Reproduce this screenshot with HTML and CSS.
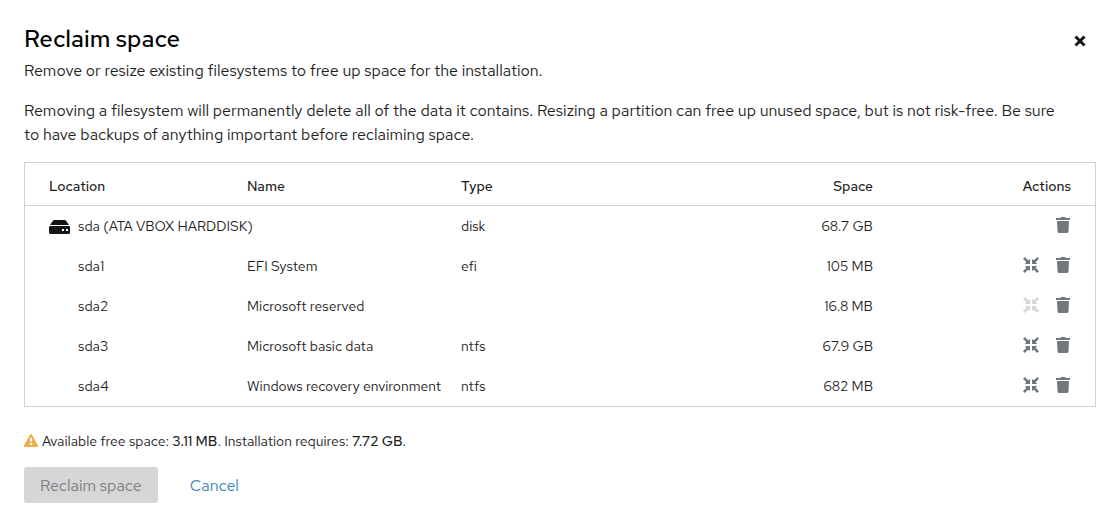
FILE: index.html
```html
<!DOCTYPE html>
<html lang="en">
<head>
    <meta charset="UTF-8">
    <meta name="viewport" content="width=device-width, initial-scale=1.0">
    <title>Reclaim space</title>
    <link rel="stylesheet" href="styles.css">
</head>
<body>

<!-- Shared icons -->
<svg class="sprite" aria-hidden="true">
    <symbol id="icon-trash" viewBox="0 0 14 16">
        <path d="M0 1h4.200L5 0h4l.8 1H14V3H0zM1 4h12l-.5 10.600a1.500 1.500 0 0 1-1.500 1.400H3a1.500 1.500 0 0 1-1.500-1.400z"/>
    </symbol>
    <symbol id="icon-shrink" viewBox="0 0 16 16">
        <path d="M1.800 0 5 3.200 7 2V7H2l1.200-2L0 1.800z"/>
        <path d="M14.200 0 11 3.200 9 2V7h5l-1.200-2L16 1.800z"/>
        <path d="M1.800 16 5 12.800 7 14V9H2l1.200 2L0 14.200z"/>
        <path d="M14.200 16 11 12.800 9 14V9h5l-1.200 2 3.200 3.200z"/>
    </symbol>
</svg>

<main class="dialog">
    <header class="dialog-header">
        <div>
            <h1>Reclaim space</h1>
            <p>Remove or resize existing filesystems to free up space for the installation.</p>
        </div>
        <button type="button" class="close" aria-label="Close">
            <svg width="12" height="12" viewBox="0 0 12 12"><path d="M1.500 1.500l9 9M10.500 1.500l-9 9" stroke="currentColor" stroke-width="3"/></svg>
        </button>
    </header>

    <p class="description">Removing a filesystem will permanently delete all of the data it contains. Resizing a partition can free up unused space, but is not risk-free. Be sure to have backups of anything important before reclaiming space.</p>

    <table class="devices">
        <thead>
            <tr>
                <th>Location</th>
                <th>Name</th>
                <th>Type</th>
                <th class="right">Space</th>
                <th class="right">Actions</th>
            </tr>
        </thead>
        <tbody>
            <tr>
                <td>
                    <div class="disk">
                        <svg width="21" height="14" viewBox="0 0 21 14">
                            <path d="M5.500 0h10a2 2 0 0 1 1.600.8L20 5H1L3.900.8A2 2 0 0 1 5.500 0z"/>
                            <path d="M1.300 6h18.400A1.300 1.300 0 0 1 21 7.300v5A1.500 1.500 0 0 1 19.500 14h-18A1.500 1.500 0 0 1 0 12.500V7.300A1.300 1.300 0 0 1 1.300 6z"/>
                            <path d="M13 9h2v2h-2zM17 9h2v2h-2z" fill="#fff"/>
                        </svg>
                        sda (ATA VBOX HARDDISK)
                    </div>
                </td>
                <td></td>
                <td>disk</td>
                <td class="right">68.7 GB</td>
                <td>
                    <div class="actions">
                        <button type="button" aria-label="Delete sda"><svg width="14" height="16"><use href="#icon-trash"/></svg></button>
                    </div>
                </td>
            </tr>
            <tr>
                <td class="partition">sda1</td>
                <td>EFI System</td>
                <td>efi</td>
                <td class="right">105 MB</td>
                <td>
                    <div class="actions">
                        <button type="button" aria-label="Shrink sda1"><svg width="16" height="16"><use href="#icon-shrink"/></svg></button>
                        <button type="button" aria-label="Delete sda1"><svg width="14" height="16"><use href="#icon-trash"/></svg></button>
                    </div>
                </td>
            </tr>
            <tr>
                <td class="partition">sda2</td>
                <td>Microsoft reserved</td>
                <td></td>
                <td class="right">16.8 MB</td>
                <td>
                    <div class="actions">
                        <button type="button" aria-label="Shrink sda2" disabled><svg width="16" height="16"><use href="#icon-shrink"/></svg></button>
                        <button type="button" aria-label="Delete sda2"><svg width="14" height="16"><use href="#icon-trash"/></svg></button>
                    </div>
                </td>
            </tr>
            <tr>
                <td class="partition">sda3</td>
                <td>Microsoft basic data</td>
                <td>ntfs</td>
                <td class="right">67.9 GB</td>
                <td>
                    <div class="actions">
                        <button type="button" aria-label="Shrink sda3"><svg width="16" height="16"><use href="#icon-shrink"/></svg></button>
                        <button type="button" aria-label="Delete sda3"><svg width="14" height="16"><use href="#icon-trash"/></svg></button>
                    </div>
                </td>
            </tr>
            <tr>
                <td class="partition">sda4</td>
                <td>Windows recovery environment</td>
                <td>ntfs</td>
                <td class="right">682 MB</td>
                <td>
                    <div class="actions">
                        <button type="button" aria-label="Shrink sda4"><svg width="16" height="16"><use href="#icon-shrink"/></svg></button>
                        <button type="button" aria-label="Delete sda4"><svg width="14" height="16"><use href="#icon-trash"/></svg></button>
                    </div>
                </td>
            </tr>
        </tbody>
    </table>

    <footer class="dialog-footer">
        <div class="status">
            <svg width="14" height="13" viewBox="0 0 14 13">
                <path d="M7 0a1 1 0 0 1 .9.500l6 10.800A1.100 1.100 0 0 1 13 13H1a1.100 1.100 0 0 1-.9-1.700l6-10.800A1 1 0 0 1 7 0z" fill="#ecb14e"/>
                <path d="M6 4h2l-.3 4H6.300zM6 9h2v2H6z" fill="#fff"/>
            </svg>
            <p>Available free space: <strong>3.11 MB</strong>. Installation requires: <strong>7.72 GB</strong>.</p>
        </div>
        <div class="buttons">
            <button type="button" class="button primary" disabled>Reclaim space</button>
            <button type="button" class="button link">Cancel</button>
        </div>
    </footer>
</main>

</body>
</html>
```

FILE: styles.css
```css
* {
    box-sizing: border-box;
}
body {
    margin: 0;
    font-family: "Red Hat Text", Roboto, sans-serif;
    font-size: 16px;
    line-height: 24px;
    color: #1f1f1f;
    background-color: #fff;
}
h1, p {
    margin: 0;
}
button {
    font: inherit;
    border: none;
    background: none;
    cursor: pointer;
}
button:disabled {
    cursor: default;
}
.sprite {
    display: none;
}
.dialog {
    padding: 23px 22px 23px 24px;
}
.dialog-header {
    display: flex;
    justify-content: space-between;
    align-items: flex-start;
}
h1 {
    font-size: 24px;
    font-weight: 500;
    line-height: 32px;
    margin-bottom: 4px;
    color: #000;
}
.close {
    display: flex;
    padding: 12px 10px;
    color: #151515;
}
.description {
    margin: 16px 0 15px;
    padding-right: 32px;
}
.devices {
    width: 100%;
    table-layout: fixed;
    border-collapse: separate;
    border-spacing: 0;
    border: 1px solid #d2d2d2;
    font-size: 14px;
    line-height: 20px;
    white-space: nowrap;
}
.devices th, .devices td {
    height: 40px;
    padding: 0 8px;
    text-align: left;
}
.devices th {
    height: 43px;
    padding-top: 4px;
    font-weight: 500;
    border-bottom: 1px solid #d2d2d2;
}
.devices th:first-child, .devices td:first-child {
    padding-left: 24px;
}
.devices th:last-child, .devices td:last-child {
    padding-right: 24px;
}
.devices .right {
    text-align: right;
}
.devices .partition:first-child {
    padding-left: 53px;
}
.disk {
    display: flex;
    align-items: center;
    gap: 8px;
}
.disk svg {
    flex-shrink: 0;
    margin-top: 2px;
    fill: #151515;
}
.actions {
    display: flex;
    justify-content: flex-end;
    gap: 16px;
    padding-bottom: 2px;
}
.actions button {
    display: flex;
    justify-content: center;
    width: 16px;
    padding: 0;
    color: #72767d;
}
.actions button:disabled {
    color: #d6d6d6;
}
.actions svg {
    fill: currentColor;
}
.dialog-footer {
    margin-top: 22px;
}
.status {
    display: flex;
    align-items: center;
    gap: 4px;
    font-size: 14px;
}
.status svg {
    margin-bottom: 2px;
}
.status strong {
    font-weight: 500;
}
.buttons {
    display: flex;
    gap: 16px;
    margin-top: 14px;
}
.button {
    padding: 7px 16px 5px;
    border-radius: 3px;
}
.primary:disabled {
    color: #7c7f84;
    background-color: #d6d6d6;
}
.link {
    color: #3d87b8;
}
```
